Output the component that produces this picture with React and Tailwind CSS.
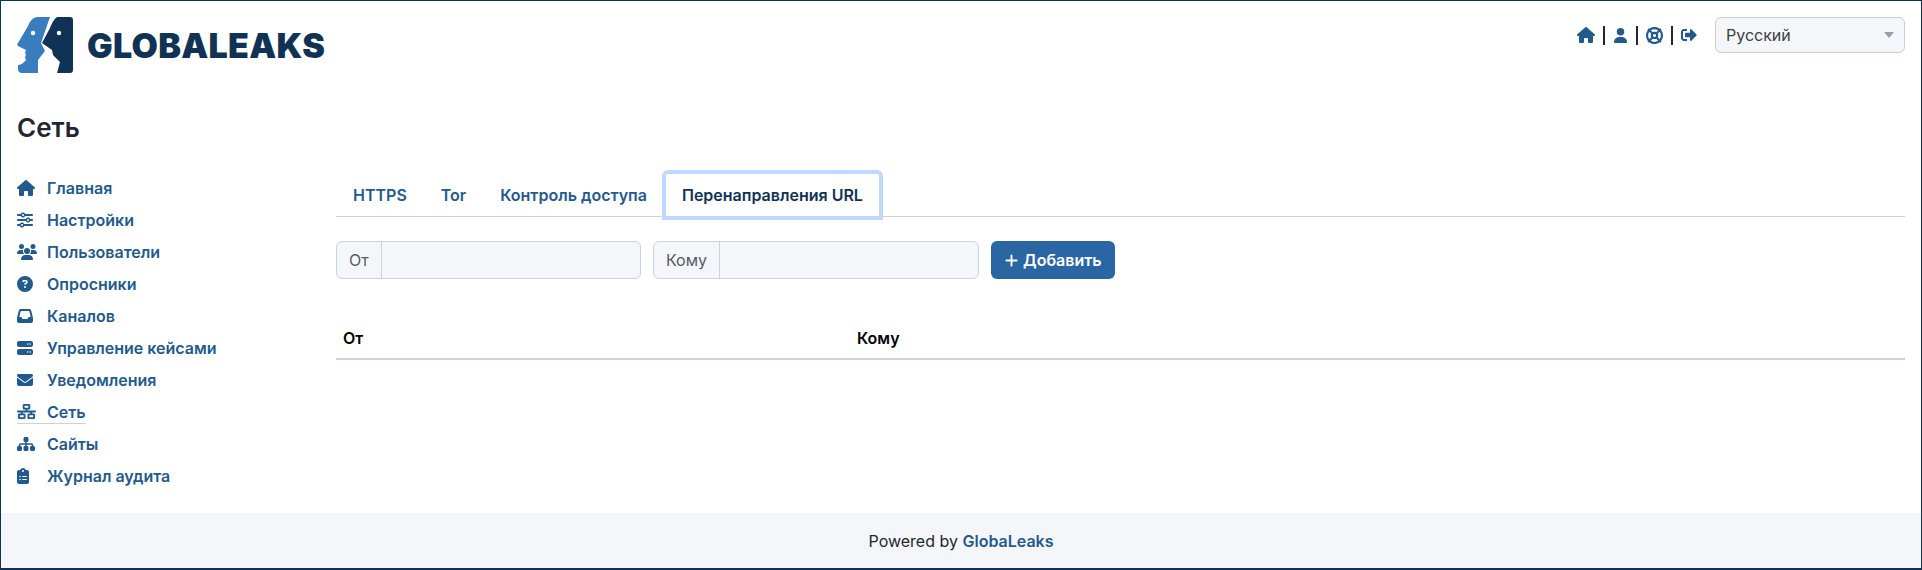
import {
  FaHouse, FaSliders, FaUsers, FaCircleQuestion, FaInbox, FaServer, FaEnvelope,
  FaNetworkWired, FaSitemap, FaClipboardList, FaUser, FaLifeRing, FaPlus,
} from 'react-icons/fa6';
import { FaSignOutAlt } from 'react-icons/fa';

const navItems = [
  { label: 'Главная', icon: FaHouse, size: 18 },
  { label: 'Настройки', icon: FaSliders, size: 16 },
  { label: 'Пользователи', icon: FaUsers, size: 20 },
  { label: 'Опросники', icon: FaCircleQuestion, size: 16 },
  { label: 'Каналов', icon: FaInbox, size: 16 },
  { label: 'Управление кейсами', icon: FaServer, size: 16 },
  { label: 'Уведомления', icon: FaEnvelope, size: 16 },
  { label: 'Сеть', icon: FaNetworkWired, size: 19, active: true },
  { label: 'Сайты', icon: FaSitemap, size: 18 },
  { label: 'Журнал аудита', icon: FaClipboardList, size: 16, narrow: true },
];

function Logo() {
  return (
    <div className="flex items-center gap-[14px]">
      <svg width="56" height="56" viewBox="0 0 56 56">
        <path fill="#3a7dbf" d="M21 0h12L24 26l4 8-7 9v13H5c-3 0-4-2-4-4v-4c2 0 6-2 8-5l-1-3 1-2-1-2 1-3-8-4c-1-1-1-2 0-3L11 9c2-5 5-9 10-9z" />
        <path fill="#103254" d="M41 0h12c2 0 3 1 3 3v50c0 2-1 3-3 3H40l3-11-7-7-1-5-10-7L33 11c2-5 5-11 8-11z" />
        <circle cx="16" cy="16" r="2.2" fill="#fff" />
        <circle cx="42" cy="16" r="2.2" fill="#fff" />
      </svg>
      <span className="font-['Inter',sans-serif] text-[34px] font-black tracking-[0.3px] text-[#103254]">GLOBALEAKS</span>
    </div>
  );
}

function Field({ label, width }) {
  return (
    <div className={`flex h-[38px] ${width} rounded-md border border-[#c8d2e3] bg-[#f5f6fa] text-[#555b65]`}>
      <span className="flex items-center border-r border-[#c8d2e3] px-3">{label}</span>
      <input className="min-w-0 flex-1 bg-transparent" aria-label={label} />
    </div>
  );
}

export default function App() {
  return (
    <div className="flex h-[570px] flex-col overflow-hidden border border-b-2 border-[#103254] bg-white font-['Inter',sans-serif] text-base text-[#212631]">
      <header className="flex items-start justify-between pl-4 pr-4 pt-4">
        <Logo />
        <div className="flex items-center gap-[18px] text-[#235a8c]">
          <div className="flex items-center gap-[8px]">
            <FaHouse size={18} />
            <span className="h-[19px] w-[2px] bg-[#212631]" />
            <FaUser size={15} />
            <span className="h-[19px] w-[2px] bg-[#212631]" />
            <FaLifeRing size={17} />
            <span className="h-[19px] w-[2px] bg-[#212631]" />
            <FaSignOutAlt size={16} />
          </div>
          <div className="flex h-[36px] w-[190px] items-center justify-between rounded-md border border-[#c9ccd3] bg-[#f5f6fa] px-[10px] text-[#3a3f49]">
            Русский
            <span className="h-0 w-0 border-x-[5px] border-t-[6px] border-x-transparent border-t-[#9a9ea6]" />
          </div>
        </div>
      </header>

      <div className="flex min-h-0 flex-1">
        <aside className="w-[335px] shrink-0 pl-4 pt-[40px]">
          <h1 className="text-[26px] font-semibold leading-[30px]">Сеть</h1>
          <nav className="mt-[29px] flex flex-col">
            {navItems.map((item) => (
              <div key={item.label} className="flex h-[32px] items-center font-semibold text-[#235a8c]">
                <div className={`flex h-[24px] items-center border-b ${item.active ? 'border-[#c8d2e3]' : 'border-transparent'}`}>
                  <span className="flex w-[30px]">
                    <item.icon size={item.size} className={item.narrow ? 'w-[12px]' : ''} />
                  </span>
                  {item.label}
                </div>
              </div>
            ))}
          </nav>
        </aside>

        <main className="flex-1 pr-4 pt-[101px]">
          <div className="flex h-[43px] items-end border-b border-[#c8d2e3] font-semibold text-[#235a8c]">
            <span className="flex h-[42px] items-center px-[17px]">HTTPS</span>
            <span className="flex h-[42px] items-center px-[17px]">Tor</span>
            <span className="flex h-[42px] items-center px-[17px]">Контроль доступа</span>
            <span className="-mb-[4px] -ml-[2px] flex h-[50px] items-center rounded-t-md border-4 border-[#bfd8fb] bg-white px-4 text-[#103254]">Перенаправления URL</span>
          </div>

          <div className="mt-6 flex gap-3">
            <Field label="От" width="w-[305px]" />
            <Field label="Кому" width="w-[326px]" />
            <button className="flex h-[38px] items-center gap-[4px] rounded-md bg-[#2a66a3] px-[13px] font-semibold text-white">
              <FaPlus size={15} /> Добавить
            </button>
          </div>

          <table className="mt-[31px] w-full table-fixed text-left text-black">
            <thead>
              <tr className="border-b-2 border-[#c8d2e3]">
                <th className="h-[49px] w-[514px] px-[7px] pb-2 align-bottom font-semibold">От</th>
                <th className="h-[49px] px-[7px] pb-2 align-bottom font-semibold">Кому</th>
              </tr>
            </thead>
          </table>
        </main>
      </div>

      <footer className="flex h-[55px] items-center justify-center bg-[#f5f6fa]">
        <span>Powered by <span className="font-semibold text-[#235a8c]">GlobaLeaks</span></span>
      </footer>
    </div>
  );
}
